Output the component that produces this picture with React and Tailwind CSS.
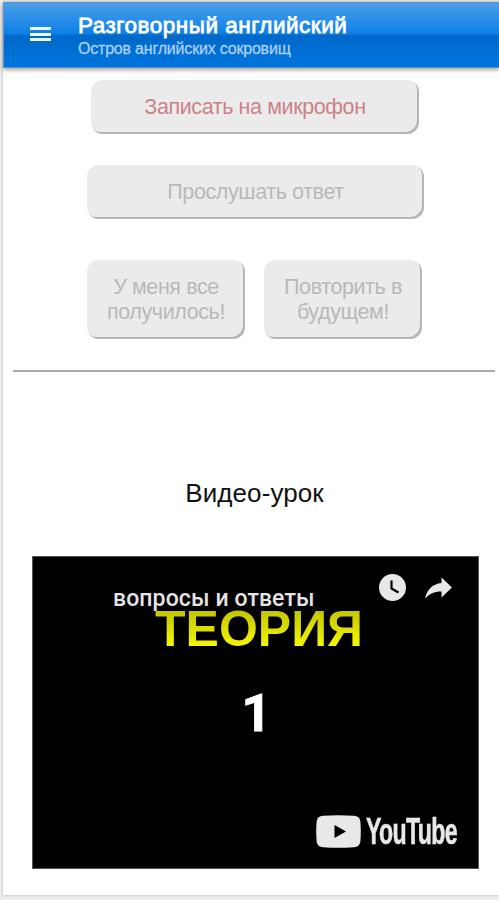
import React from "react";

const Header = () => (
  <header className="relative z-10 flex h-[66px] items-start border border-[#5a94d6] border-r-0 bg-[linear-gradient(180deg,#4b9fe8_0%,#0d80e8_48%,#0068c8_51%,#0076de_100%)] pl-[26px] shadow-[0_2px_4px_rgba(80,65,50,0.5)]">
    <button className="mt-[24px] flex w-[21px] flex-col gap-[2.5px]" aria-label="Меню">
      <span className="h-[3px] w-full bg-[#eef6ff]" />
      <span className="h-[3px] w-full bg-[#eef6ff]" />
      <span className="h-[3px] w-full bg-[#eef6ff]" />
    </button>
    <div className="ml-[27px] mt-[10px] whitespace-nowrap">
      <h1 className="text-[22.5px] leading-[25px] tracking-[0.5px] text-white [-webkit-text-stroke:0.8px_white]">
        Разговорный английский
      </h1>
      <p className="text-[16px] leading-[22px] tracking-[-0.2px] text-[#a9d0f8] [-webkit-text-stroke:0.3px_#a9d0f8]">
        Остров английских сокровищ
      </p>
    </div>
  </header>
);

const Button = ({ className, children }) => (
  <button
    className={`flex items-center justify-center rounded-[12px] bg-[#ebebeb] text-center text-[21.5px] leading-[25px] tracking-[-0.4px] shadow-[inset_-2px_-2px_0_#b5b5b5] ${className}`}
  >
    {children}
  </button>
);

const YouTubeLogo = () => (
  <div className="flex h-[34px] items-center text-[#e8e8e8]">
    <svg className="h-[33px] w-[45px]" viewBox="0 0 45 33">
      <path
        fill="currentColor"
        d="M7 .8Q22 -.2 38 .8Q43.500 1.200 44.300 6Q45.300 16 44.300 27Q43.500 31.800 38 32.200Q22 33.200 7 32.200Q1.500 31.800.7 27Q-.3 16 .7 6Q1.500 1.200 7 .8Z"
      />
      <path fill="#000" d="M18.500 10L30 16.500L18.500 23Z" />
    </svg>
    <span className="ml-[5px] block w-[92px]">
      <span className="inline-block origin-left scale-x-[0.625] whitespace-nowrap pt-[4px] text-[37px] font-bold leading-[34px] tracking-[-1px] [-webkit-text-stroke:0.6px_#e8e8e8]">
        YouTube
      </span>
    </span>
  </div>
);

const Video = () => (
  <div className="ml-[29px] flex h-[313px] w-[447px] flex-col border border-[#555] bg-black">
    <div className="flex h-[90px] justify-between">
      <div className="ml-[80px] mt-[29px] whitespace-nowrap">
        <p className="font-['Roboto',sans-serif] text-[23px] font-medium leading-[26px] tracking-[0.12px] text-[#e4e4e4]">
          вопросы и ответы
        </p>
        <p className="-mt-[11px] ml-[42px] bg-[linear-gradient(180deg,#c4c800_20%,#f6f600_80%)] bg-clip-text text-[50px] font-bold leading-[56px] text-transparent">
          ТЕОРИЯ
        </p>
      </div>
      <div className="mr-[25px] mt-[17px] flex gap-[19px] text-[#e8e8e8]">
        <svg className="h-[27px] w-[27px]" viewBox="0 0 27 27">
          <circle cx="13.500" cy="13.500" r="13.500" fill="currentColor" />
          <path d="M12.500 6.500V14.500L19.500 18.500" fill="none" stroke="#000" strokeWidth="2.200" />
        </svg>
        <svg className="mt-[3px] h-[22px] w-[28px]" viewBox="0 0 28 22">
          <path fill="currentColor" d="M16.500 .5L27 10.500L16.500 20.500V14.500C9 14.500 4.500 17 0 21.500C2 13 7 7 16.500 6Z" />
        </svg>
      </div>
    </div>
    <p className="mt-[37px] pl-[2px] text-center font-['Roboto',sans-serif] text-[52px] font-bold leading-[60px] text-white [-webkit-text-stroke:0.8px_white]">
      1
    </p>
    <div className="mb-[20px] ml-[283px] mt-auto">
      <YouTubeLogo />
    </div>
  </div>
);

const App = () => {
  return (
    <div className="h-[900px] w-[499px] overflow-hidden bg-[#eeeeee] pl-[3px] pt-[2px] font-['Liberation_Sans',Arial,sans-serif]">
      <div className="h-[893px] bg-white shadow-[0_0_3px_rgba(0,0,0,0.25)]">
        <Header />
        <main className="flex flex-col">
          <Button className="ml-[88px] mt-[12px] h-[54px] w-[328px] text-[#cc8288]">
            Записать на микрофон
          </Button>
          <Button className="ml-[84px] mt-[31px] h-[54px] w-[337px] text-[#b9b9b9]">
            Прослушать ответ
          </Button>
          <div className="ml-[84px] mt-[41px] flex gap-[19px]">
            <Button className="h-[79px] w-[158px] text-[#b9b9b9]">
              У меня все
              <br />
              получилось!
            </Button>
            <Button className="h-[79px] w-[158px] text-[#b9b9b9]">
              Повторить в
              <br />
              будущем!
            </Button>
          </div>
          <hr className="ml-[10px] mr-[4px] mt-[31px] border-t-2 border-[#aaaaaa]" />
          <h2 className="mt-[105px] pl-[7px] text-center text-[26px] leading-[32px] tracking-[0.1px] text-[#111]">
            Видео-урок
          </h2>
          <div className="mt-[47px]">
            <Video />
          </div>
        </main>
      </div>
    </div>
  );
};

export default App;
